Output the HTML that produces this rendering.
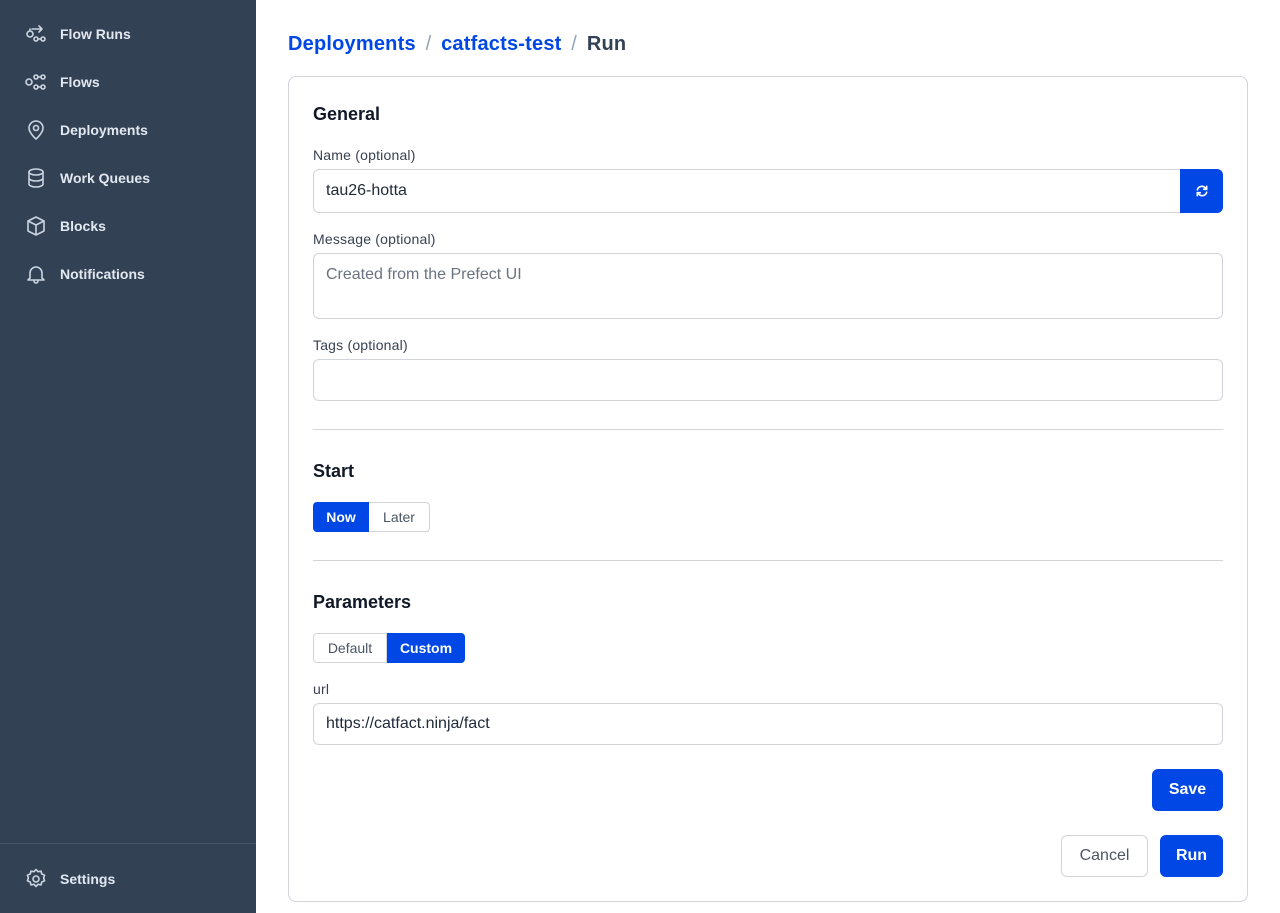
<!DOCTYPE html>
<html><head><style>
*{box-sizing:border-box;margin:0;padding:0}
body{width:1280px;height:913px;font-family:"Liberation Sans",sans-serif;background:#fff;position:relative;overflow:hidden;color:#111827}
.sb{position:absolute;left:0;top:0;width:256px;height:913px;background:#334155}
.ni{position:absolute;left:24px;display:flex;align-items:center;color:#e2e8f0;font-size:14px;font-weight:bold}
.ni svg{width:24px;height:24px;margin-right:12px;fill:none;stroke:#cbd5e1;stroke-width:1.6;stroke-linecap:round;stroke-linejoin:round}
.hr{position:absolute;left:0;top:843px;width:256px;height:1px;background:#475569}
.bc{position:absolute;left:288px;top:33px;font-size:20px;font-weight:bold;color:#334155;letter-spacing:0.2px}
.bc a{color:#0047e6;text-decoration:none}.bc .s{color:#94a3b8;font-weight:normal;margin:0 4px}
.card{position:absolute;left:288px;top:76px;width:960px;height:826px;border:1px solid #d1d5db;border-radius:8px}
.abs{position:absolute}
h3{position:absolute;left:313px;font-size:18px;font-weight:bold;color:#111827}
.lb{position:absolute;left:313px;font-size:14px;color:#374151;letter-spacing:0.2px}
.in{position:absolute;left:313px;width:910px;border:1px solid #d1d5db;border-radius:6px;font-size:16px;color:#1f2937;padding-left:12px}
.line{position:absolute;left:313px;width:910px;height:1px;background:#d1d5db}
.seg{position:absolute;height:30px;display:flex;font-size:14px;font-weight:bold}
.seg div{border:1px solid #d1d5db;display:flex;align-items:center;justify-content:center;color:#4b5563;font-weight:normal}
.seg .on{background:#0047e6;border-color:#0047e6;color:#fff;font-weight:bold}
.btn{position:absolute;height:42px;border-radius:6px;display:flex;align-items:center;justify-content:center;font-size:16px;font-weight:bold}
</style></head><body>
<div class="sb">
<div class="ni" style="top:22px"><svg viewBox="0 0 24 24"><circle cx="6" cy="12" r="3"/><circle cx="12" cy="17" r="2"/><circle cx="19" cy="17" r="2"/><path d="M14 17h3M8 7h10M15 4l3 3-3 3M6 9V7"/></svg>Flow Runs</div>
<div class="ni" style="top:70px"><svg viewBox="0 0 24 24"><circle cx="5" cy="12" r="3"/><circle cx="12" cy="7" r="2"/><circle cx="19" cy="7" r="2"/><circle cx="12" cy="17" r="2"/><circle cx="19" cy="17" r="2"/><path d="M14 7h3M14 17h3"/></svg>Flows</div>
<div class="ni" style="top:118px"><svg viewBox="0 0 24 24"><path d="M12 21s-7-6-7-11a7 7 0 0114 0c0 5-7 11-7 11z"/><circle cx="12" cy="10" r="2.5"/></svg>Deployments</div>
<div class="ni" style="top:166px"><svg viewBox="0 0 24 24"><ellipse cx="12" cy="6" rx="7" ry="3"/><path d="M5 6v12c0 1.7 3.1 3 7 3s7-1.3 7-3V6M5 12c0 1.7 3.1 3 7 3s7-1.3 7-3"/></svg>Work Queues</div>
<div class="ni" style="top:214px"><svg viewBox="0 0 24 24"><path d="M12 3l8 4v10l-8 4-8-4V7z M4 7l8 4 8-4 M12 11v10"/></svg>Blocks</div>
<div class="ni" style="top:262px"><svg viewBox="0 0 24 24"><path d="M6 16V11a6 6 0 0112 0v5l2 2H4z M10 19a2 2 0 004 0"/></svg>Notifications</div>
<div class="hr"></div>
<div class="ni" style="top:867px"><svg viewBox="0 0 24 24"><circle cx="12" cy="12" r="3"/><path d="M12 2.5l2 2.2 3-.6.8 2.9 2.8 1.2-1 2.8 1 2.8-2.8 1.2-.8 2.9-3-.6-2 2.2-2-2.2-3 .6-.8-2.9-2.8-1.2 1-2.8-1-2.8 2.8-1.2.8-2.9 3 .6z"/></svg>Settings</div>
</div>
<div class="bc"><a>Deployments</a> <span class="s">/</span> <a>catfacts-test</a> <span class="s">/</span> Run</div>
<div class="card"></div>
<h3 style="top:104px">General</h3>
<div class="lb" style="top:147px">Name (optional)</div>
<div class="in" style="top:169px;height:44px;line-height:42px;width:868px;border-radius:6px 0 0 6px">tau26-hotta</div>
<div class="abs" style="left:1180px;top:169px;width:43px;height:44px;background:#0047e6;border-radius:0 6px 6px 0;display:flex;align-items:center;justify-content:center"><svg width="14" height="14" viewBox="0 0 24 24" fill="none" stroke="#fff" stroke-width="2.8" stroke-linecap="round"><path d="M4 10a8 8 0 0114-3l2 2M20 14a8 8 0 01-14 3l-2-2M20 4v5h-5M4 20v-5h5"/></svg></div>
<div class="lb" style="top:231px">Message (optional)</div>
<div class="in" style="top:253px;height:66px;padding-top:12px;color:#6b7280">Created from the Prefect UI</div>
<div class="lb" style="top:337px">Tags (optional)</div>
<div class="in" style="top:359px;height:42px"></div>
<div class="line" style="top:429px"></div>
<h3 style="top:461px">Start</h3>
<div class="seg" style="left:313px;top:502px"><div class="on" style="width:56px;border-radius:4px 0 0 4px">Now</div><div style="width:61px;border-radius:0 4px 4px 0;border-left:none">Later</div></div>
<div class="line" style="top:560px"></div>
<h3 style="top:592px">Parameters</h3>
<div class="seg" style="left:313px;top:633px"><div style="width:74px;border-radius:4px 0 0 4px">Default</div><div class="on" style="width:78px;border-radius:0 4px 4px 0">Custom</div></div>
<div class="lb" style="top:681px">url</div>
<div class="in" style="top:703px;height:42px;line-height:40px">https://catfact.ninja/fact</div>
<div class="btn" style="left:1152px;top:769px;width:71px;background:#0047e6;color:#fff">Save</div>
<div class="btn" style="left:1061px;top:835px;width:87px;border:1px solid #d1d5db;color:#4b5563;font-weight:normal">Cancel</div>
<div class="btn" style="left:1160px;top:835px;width:63px;background:#0047e6;color:#fff">Run</div>
</body></html>
